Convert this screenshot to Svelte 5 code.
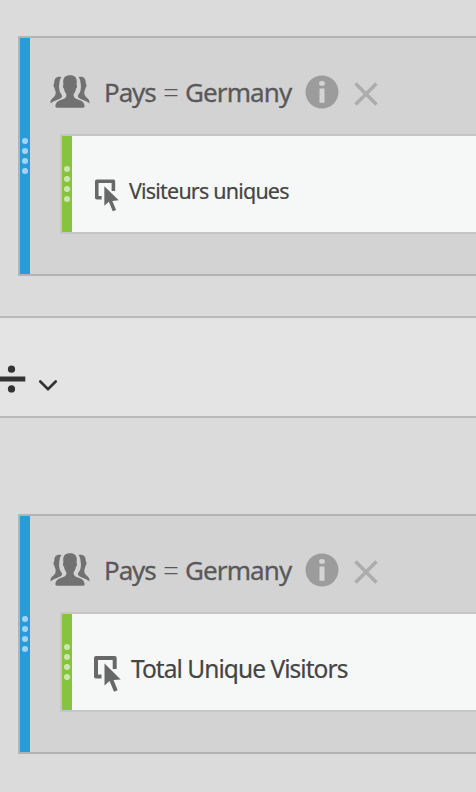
<script>
  const groups = [
    { segment: 'Germany', metric: 'Visiteurs uniques', large: false },
    { segment: 'Germany', metric: 'Total Unique Visitors', large: true }
  ];
</script>

{#snippet grip(kind)}
  <div class="grip {kind}">
    <i></i><i></i><i></i><i></i>
  </div>
{/snippet}

{#snippet card(group)}
  <section class="card">
    {@render grip('blue')}
    <div class="content">
      <header>
        <svg class="people" width="40" height="34" viewBox="0 0 40 34">
          <g fill="#717171">
            <path d="M11.500 2C7.500 1.200 4.500 2.500 4.300 7.200c-.1 1.800-1 2.100-.8 3.600.1 1.200.9 1.400 1.100 2.700.3 1.700 1.100 2.500 1.100 4.100 0 2.300-.9 3.900-2.300 5C1.200 24.200.3 25.500.5 28.600c2.700-3.200 10.500-4.300 11.500-6.800.7-1.900-2-3.600-2.500-6.400-.4-2.200-.6-3.400-.3-5.300.3-2.600.4-6 2.300-8.100z" />
            <path d="M28.500 2c4-.8 7 .5 7.200 5.200.1 1.800 1 2.100.8 3.600-.1 1.200-.9 1.400-1.100 2.700-.3 1.700-1.100 2.500-1.100 4.100 0 2.300.9 3.900 2.300 5 2.200 1.600 3.100 2.900 2.900 6-2.700-3.200-10.500-4.300-11.500-6.800-.7-1.900 2-3.600 2.500-6.400.4-2.200.6-3.400.3-5.300-.3-2.600-.4-6-2.300-8.100z" />
            <path d="M20 .2c-4.800 0-7 2.500-6.800 6.700.1 1.500.2 2.100.1 3-.7 1.200-.4 3 .7 3.800.4 2.600 1.300 3.900 2.300 5.200.5 3-.7 4.200-3.700 5.300-5.200 1.900-6.700 3.300-7.200 6.800-.1 1.200.4 1.700 1.600 1.700h26c1.200 0 1.700-.5 1.600-1.700-.5-3.500-2-4.900-7.200-6.800-3-1.100-4.200-2.300-3.700-5.300 1-1.300 1.900-2.600 2.300-5.200 1.100-.8 1.400-2.600.7-3.800-.1-.9 0-1.500.1-3C27 2.700 24.800.2 20 .2z" />
          </g>
        </svg>
        <h2><span class="name">Pays</span><span class="eq">=</span><span class="value">{group.segment}</span></h2>
        <svg class="info" width="34" height="34" viewBox="0 0 34 34">
          <circle cx="17" cy="17" r="16.500" fill="#9c9c9c" />
          <ellipse cx="17" cy="8.400" rx="2.900" ry="2.400" fill="#d4d4d4" />
          <path d="M14.500 13.500h5v14.300h-5z" fill="#d4d4d4" />
        </svg>
        <svg class="close" width="24" height="24" viewBox="0 0 24 24">
          <path d="M1.500 1.500l21 21M22.500 1.500l-21 21" fill="none" stroke="#acacac" stroke-width="3.500" />
        </svg>
      </header>
      <div class="metric" class:large={group.large}>
        {@render grip('green')}
        <svg class="pointer" viewBox="0 0 27 36">
          <path d="M7.500 20.500H2V2h18.700v11" fill="none" stroke="#686868" stroke-width="4" stroke-linejoin="round" />
          <path d="M10.500 7.500V29.500l5.100-4.400 4.400 10.700 3.700-1.600-4.200-10.100 7.200-.7z" fill="#686868" stroke="#f6f8f7" stroke-width="2.600" paint-order="stroke" />
        </svg>
        <span class="label">{group.metric}</span>
      </div>
    </div>
  </section>
{/snippet}

<main>
  {@render card(groups[0])}
  <div class="operator">
    <svg class="divide" width="26" height="30" viewBox="0 0 26 30">
      <path d="M0 15h25.300" stroke="#333" stroke-width="5" />
      <circle cx="11.500" cy="5.200" r="3.600" fill="#333" />
      <circle cx="11.500" cy="24.900" r="3.600" fill="#333" />
    </svg>
    <svg class="chevron" width="18" height="12" viewBox="0 0 18 12">
      <path d="M1.300 1.500L9 9.200l7.700-7.700" fill="none" stroke="#333" stroke-width="2.700" stroke-linecap="round" />
    </svg>
  </div>
  {@render card(groups[1])}
</main>

<style>
  :global(body) { margin: 0; background: #dbdbdb; }
  main {
    box-sizing: border-box;
    width: 100%;
    height: 792px;
    padding-top: 36px;
    overflow: hidden;
    background: #dbdbdb;
    font-family: "Noto Sans", "Open Sans", sans-serif;
  }
  .card {
    box-sizing: border-box;
    display: flex;
    height: 240px;
    margin-left: 18px;
    border: 2px solid #b3b3b3;
    border-right: 0;
    background: #d3d3d3;
  }
  .content { flex: 1; min-width: 0; }
  .grip {
    display: flex;
    flex: none;
    flex-direction: column;
    align-items: center;
    justify-content: center;
    gap: 4px;
    width: 10px;
  }
  .grip i { width: 6px; height: 6px; border-radius: 50%; }
  .blue { background: #269dd8; }
  .blue i { background: #a4d5ef; }
  .green { background: #86c440; }
  .green i { background: #cce6af; }
  header { display: flex; align-items: flex-start; height: 96px; }
  .people { flex: none; margin: 37px 0 0 20px; }
  h2 {
    display: flex;
    flex: none;
    width: 200px;
    margin: 36px 0 0 14px;
    font-size: 26px;
    font-weight: 400;
    line-height: 36px;
    white-space: nowrap;
    color: #59595b;
    -webkit-text-stroke: 0.3px #59595b;
  }
  .name { width: 59px; letter-spacing: -1.1px; }
  .eq { width: 22px; font-size: 28px; font-weight: 300; -webkit-text-stroke: 0; }
  .value { letter-spacing: -0.9px; }
  .info { flex: none; margin-top: 37px; margin-left: 1px; }
  .close { flex: none; margin: 44px 0 0 15px; }
  .metric {
    box-sizing: border-box;
    display: flex;
    align-items: flex-start;
    height: 100px;
    margin-left: 30px;
    border: 2px solid #c6c6c6;
    border-right: 0;
    background: #f6f8f7;
  }
  .metric .grip { align-self: stretch; }
  .pointer { flex: none; width: 24px; height: 33px; margin: 43px 0 0 23px; }
  .label {
    margin: 40px 0 0 10px;
    font-size: 21.5px;
    line-height: 30px;
    letter-spacing: -0.8px;
    white-space: nowrap;
    color: #454545;
    -webkit-text-stroke: 0.2px #454545;
  }
  .large .pointer { width: 27px; height: 36px; margin: 42px 0 0 22px; }
  .large .label { margin: 39px 0 0 10px; font-size: 24.5px; line-height: 32px; letter-spacing: -0.95px; }
  .operator {
    box-sizing: border-box;
    display: flex;
    align-items: flex-start;
    height: 102px;
    margin: 40px 0 96px;
    border: 2px solid #b9b9b9;
    border-width: 2px 0;
    background: #e4e4e4;
  }
  .divide { margin-top: 46px; }
  .chevron { margin: 62px 0 0 13px; }
</style>
